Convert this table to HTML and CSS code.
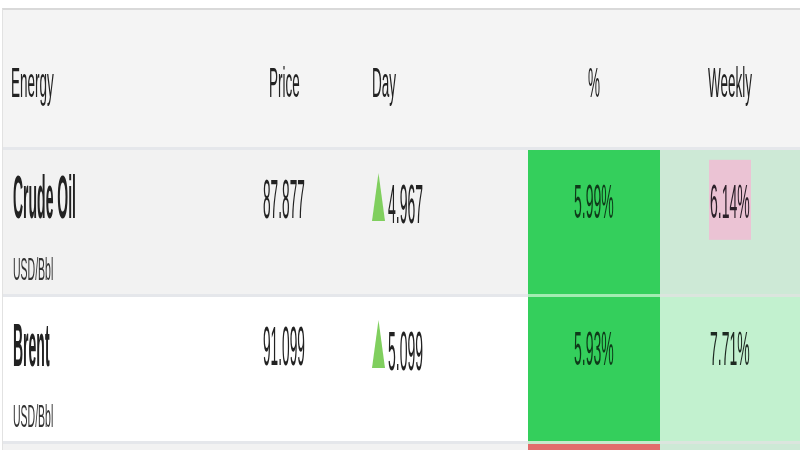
FILE: index.html
```html
<!DOCTYPE html>
<html lang="en">
<head>
    <meta charset="UTF-8">
    <meta name="viewport" content="width=device-width, initial-scale=1.0">
    <title>Energy Quotes</title>
    <link rel="stylesheet" href="styles.css">
</head>
<body>
    <div class="quotes">
        <div class="row head">
            <div class="cell name"><span class="t t-head">Energy</span></div>
            <div class="cell num"><span class="t t-head">Price</span></div>
            <div class="cell day"><span class="t t-head">Day</span></div>
            <div class="cell pct"><span class="t t-head">%</span></div>
            <div class="cell week"><span class="t t-head">Weekly</span></div>
        </div>

        <div class="row item alt">
            <div class="cell name">
                <div class="main"><span class="t t-name">Crude Oil</span></div>
                <div class="sub"><span class="t t-sub">USD/Bbl</span></div>
            </div>
            <div class="cell num">
                <div class="main"><span class="t t-val">87.877</span></div>
            </div>
            <div class="cell day">
                <div class="main">
                    <svg class="up" width="13" height="48" viewBox="0 0 13 48"><polygon points="6.5,0 13,48 0,48"/></svg>
                    <span class="t t-day">4.967</span>
                </div>
            </div>
            <div class="cell pct">
                <div class="main"><span class="t t-pct">5.99%</span></div>
            </div>
            <div class="cell week">
                <div class="main"><span class="t t-pct mark">6.14%</span></div>
            </div>
        </div>

        <div class="row item">
            <div class="cell name">
                <div class="main"><span class="t t-name">Brent</span></div>
                <div class="sub"><span class="t t-sub">USD/Bbl</span></div>
            </div>
            <div class="cell num">
                <div class="main"><span class="t t-val">91.099</span></div>
            </div>
            <div class="cell day">
                <div class="main">
                    <svg class="up" width="13" height="48" viewBox="0 0 13 48"><polygon points="6.5,0 13,48 0,48"/></svg>
                    <span class="t t-day">5.099</span>
                </div>
            </div>
            <div class="cell pct">
                <div class="main"><span class="t t-pct">5.93%</span></div>
            </div>
            <div class="cell week">
                <div class="main"><span class="t t-pct">7.71%</span></div>
            </div>
        </div>

        <div class="row item alt down">
            <div class="cell name"></div>
            <div class="cell num"></div>
            <div class="cell day"></div>
            <div class="cell pct"></div>
            <div class="cell week"></div>
        </div>
    </div>
</body>
</html>
```

FILE: styles.css
```css
* {
    margin: 0;
    padding: 0;
    box-sizing: border-box;
}

html, body {
    overflow: hidden;
}

body {
    font-family: "Liberation Sans", Arial, sans-serif;
    color: #222;
    background: #fff;
}

.quotes {
    margin: 8px 0 0 2px;
    border-top: 2px solid #d9d9d9;
    border-left: 1px solid #e2e2e2;
}

.row {
    display: grid;
    grid-template-columns: 232px 98px 195px 132px 140px;
}

/* stretched text: laid out at its real width, drawn tall */
.t {
    display: inline-block;
    line-height: 1;
    white-space: nowrap;
    will-change: transform;
}

.t-head {
    font-size: 13.5px;
    transform: scaleY(3.15);
}

.t-name {
    font-size: 14px;
    font-weight: bold;
    transform: scaleY(4.3);
}

.t-sub {
    font-size: 10.5px;
    color: #333;
    transform: scaleY(3.05);
}

.t-val {
    font-size: 13.7px;
    margin-top: 7px;
    transform: scaleY(4.1);
}

.t-day {
    font-size: 14px;
    margin-top: 11px;
    transform: scaleY(3.95);
}

.t-pct {
    font-size: 14px;
    margin-top: 8px;
    transform: scaleY(3.45);
}

.mark {
    background: #ebc3d4;
    padding: 4.5px 1px;
    margin-top: 4px;
    color: #2b2029;
}

/* header */
.head {
    height: 140px;
    background: #f4f4f4;
    border-bottom: 3px solid #e5e7eb;
}

.head .cell {
    display: flex;
    align-items: center;
    padding-top: 11px;
}

/* body rows */
.item {
    background: #fff;
}

.item.alt {
    background: #f2f2f2;
}

.item .cell {
    height: 147px;
    padding-top: 23px;
    border-bottom: 3px solid #e5e7eb;
}

.main {
    height: 48px;
    display: flex;
    align-items: center;
}

.sub {
    height: 20px;
    margin-top: 37px;
    display: flex;
    align-items: center;
}

.cell.name {
    padding-left: 10px;
}

.head .cell.name {
    padding-left: 8px;
}

.cell.num .main,
.cell.pct .main,
.cell.week .main,
.head .cell.num,
.head .cell.pct,
.head .cell.week {
    justify-content: center;
}

.cell.day {
    padding-left: 39px;
}

.day .main {
    gap: 3px;
}

.up polygon {
    fill: #80cf5e;
}

.item .cell.pct {
    background: #34cf5c;
    color: #0e3a19;
    border-bottom-color: #a2ecb2;
}

.item .cell.week {
    background: #c2f1cf;
    color: #1e2a22;
    border-bottom-color: #dbe5de;
}

.item.alt .cell.week {
    background: #cde9d6;
}

.item:nth-child(3) .cell.pct {
    border-bottom-color: #c6e9cc;
}

.item.down .cell {
    height: 6px;
    padding: 0;
    border-bottom: 0;
}

.down .cell.pct {
    background: #e26c6c;
}

.down .cell.week {
    background: #f2e0e0;
}
```
